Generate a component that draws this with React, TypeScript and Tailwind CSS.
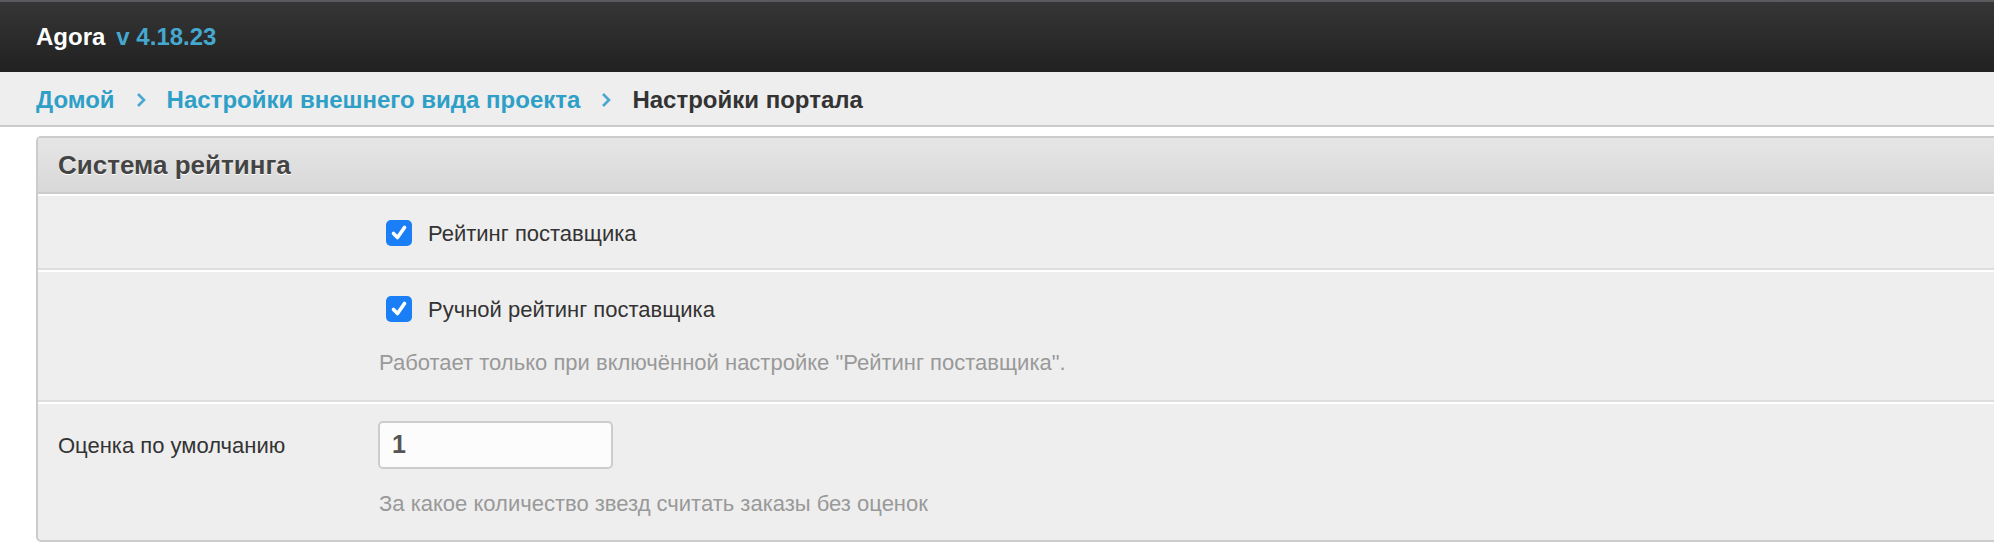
import React from "react";

const font = { fontFamily: '"Liberation Sans", Arial, sans-serif' };

function Chevron() {
  return (
    <svg width="10" height="16" viewBox="0 0 10 16" className="mx-[21px] shrink-0">
      <polyline points="2,2 8,8 2,14" fill="none" stroke="#4aa8d0" strokeWidth="2.6" strokeLinecap="butt" />
    </svg>
  );
}

function Check() {
  return (
    <div className="w-[26px] h-[26px] rounded-[5px] bg-[#1a7ff6] flex items-center justify-center shrink-0">
      <svg width="18" height="18" viewBox="0 0 18 18">
        <polyline points="3.5,9.5 7.5,13.5 14.5,3.5" fill="none" stroke="#fff" strokeWidth="3.6" strokeLinecap="round" strokeLinejoin="round" />
      </svg>
    </div>
  );
}

export default function App() {
  return (
    <div className="w-[1994px] h-[548px] overflow-hidden bg-white" style={font}>
      <div className="h-[72px] border-t-2 border-[#5b5b60] bg-gradient-to-b from-[#363636] to-[#212121] flex items-center pl-[36px]">
        <span className="text-[24px] font-bold text-white leading-none">Agora</span>
        <span className="ml-[11px] text-[24px] font-bold text-[#45a8cf] leading-none">v 4.18.23</span>
      </div>
      <div className="h-[55px] bg-[#eeeeee] border-b-2 border-[#cccccc] flex items-center pl-[36px] pt-[2px]">
        <span className="text-[24px] font-bold text-[#2e9fc7]">Домой</span>
        <Chevron />
        <span className="text-[24px] font-bold text-[#2e9fc7]">Настройки внешнего вида проекта</span>
        <Chevron />
        <span className="text-[24px] font-bold text-[#333333]">Настройки портала</span>
      </div>
      <div className="mt-[9px] ml-[36px] mr-[-20px] border-2 border-[#cccccc] rounded-[5px] bg-[#eeeeee] overflow-hidden">
        <div className="h-[56px] bg-gradient-to-b from-[#e6e6e6] to-[#d8d8d8] border-b-2 border-[#cccccc] flex items-center pl-[20px]">
          <span className="text-[26px] font-bold text-[#444444] [text-shadow:0_1px_0_#ffffff]">Система рейтинга</span>
        </div>
        <div className="border-t-2 border-white border-b-2 border-b-[#dddddd] h-[76px] flex">
          <div className="w-[340px] shrink-0" />
          <div className="pt-[24px]">
            <div className="flex items-center h-[26px] ml-[8px]">
              <Check />
              <span className="ml-[16px] text-[22px] text-[#333333]">Рейтинг поставщика</span>
            </div>
          </div>
        </div>
        <div className="border-t-2 border-white border-b-2 border-b-[#dddddd] h-[132px] flex">
          <div className="w-[340px] shrink-0" />
          <div className="pt-[24px]">
            <div className="flex items-center h-[26px] ml-[8px]">
              <Check />
              <span className="ml-[16px] text-[22px] text-[#333333]">Ручной рейтинг поставщика</span>
            </div>
            <div className="mt-[28px] text-[22px] leading-[26px] text-[#999999] ml-[1px]">
              Работает только при включённой настройке "Рейтинг поставщика".
            </div>
          </div>
        </div>
        <div className="border-t-2 border-white h-[138px] flex">
          <div className="w-[340px] shrink-0 pl-[20px] pt-[17px] h-[65px] flex items-center">
            <span className="text-[22px] text-[#333333]">Оценка по умолчанию</span>
          </div>
          <div className="pt-[17px]">
            <div className="w-[235px] h-[48px] border-2 border-[#cccccc] rounded-[5px] bg-[#fcfcfc] flex items-center pl-[12px]">
              <span className="text-[25px] font-bold text-[#555555]">1</span>
            </div>
            <div className="mt-[22px] text-[22px] leading-[26px] text-[#999999] ml-[1px]">
              За какое количество звезд считать заказы без оценок
            </div>
          </div>
        </div>
      </div>
    </div>
  );
}
